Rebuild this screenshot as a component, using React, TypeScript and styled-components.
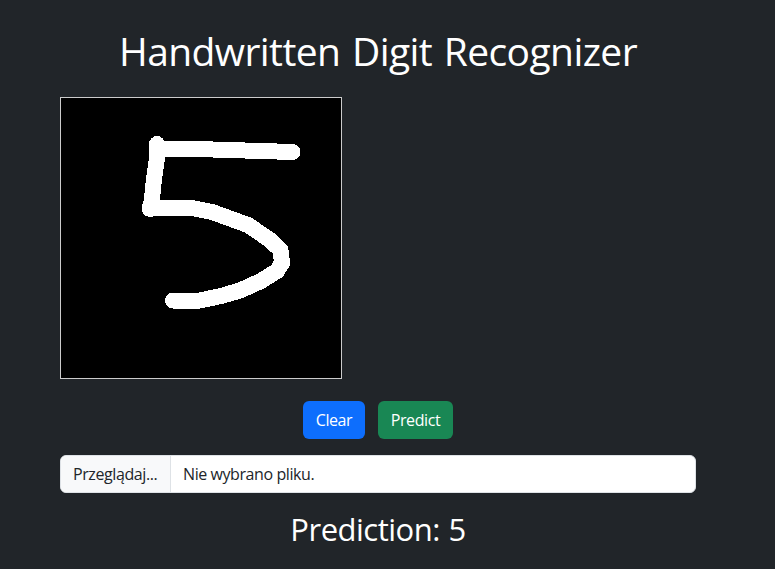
import React from "react";
import styled, { createGlobalStyle } from "styled-components";

const GlobalStyle = createGlobalStyle`
  *, *::before, *::after { box-sizing: border-box; }
  body {
    margin: 0;
    background: #212529;
    color: #fff;
    font-family: "Open Sans", "Noto Sans", sans-serif;
    font-size: 16px;
    line-height: 1.5;
    overflow: hidden;
  }
`;

const Page = styled.main`
  display: flex;
  flex-direction: column;
  width: 636px;
  height: 569px;
  margin-left: 60px;
  padding-top: 27px;
`;

const Title = styled.h1`
  margin: 0 0 22px;
  font-size: 39px;
  font-weight: 400;
  line-height: 48px;
  letter-spacing: -0.58px;
  word-spacing: 2px;
  text-align: center;
  white-space: nowrap;
`;

const Board = styled.div`
  width: 282px;
  height: 282px;
  border: 1px solid #ccc;
  background: #000;

  svg { display: block; }
`;

const Actions = styled.div`
  display: flex;
  justify-content: center;
  gap: 13px;
  margin: 22px 0 16px;
`;

const Button = styled.button<{ $color: string; $width: number }>`
  width: ${({ $width }) => $width}px;
  height: 38px;
  padding: 0;
  border: 0;
  border-radius: 6px;
  background: ${({ $color }) => $color};
  color: #fff;
  font: inherit;
  letter-spacing: -0.42px;
`;

const FileField = styled.label`
  display: flex;
  height: 38px;
  border: 1px solid #dee2e6;
  border-radius: 6px;
  background: #fff;
  color: #212529;
  line-height: 37px;
  overflow: hidden;
  white-space: nowrap;
`;

const Browse = styled.span`
  width: 110px;
  padding-left: 12px;
  border-right: 1px solid #dee2e6;
  background: #f8f9fa;
  letter-spacing: -0.4px;
`;

const FileName = styled.span`
  padding-left: 12px;
  letter-spacing: -0.42px;
`;

const Result = styled.h2`
  margin: 17px 0 0;
  font-size: 31px;
  font-weight: 400;
  line-height: 38px;
  letter-spacing: -0.5px;
  word-spacing: 1px;
  text-align: center;
`;

export default function App() {
  return (
    <>
      <GlobalStyle />
      <Page>
        <Title>Handwritten Digit Recognizer</Title>
        <Board>
          <svg width="280" height="280" viewBox="0 0 280 280" shapeRendering="crispEdges">
            <g fill="none" stroke="#fff" strokeWidth="16" strokeLinecap="round" strokeLinejoin="round">
              <path d="M96 46V60L94 74L92 90L91 101L89 111" />
              <path d="M96 51H136L231.5 54" />
              <path d="M88.5 110H131L151 114L187 127L209 142L219.5 152L221 165L216 173L200 183L179 192.5L160 198L139 202.5H112" />
            </g>
          </svg>
        </Board>
        <Actions>
          <Button type="button" $color="#0d6efd" $width={62}>Clear</Button>
          <Button type="button" $color="#198754" $width={75}>Predict</Button>
        </Actions>
        <FileField>
          <Browse>Przeglądaj...</Browse>
          <FileName>Nie wybrano pliku.</FileName>
        </FileField>
        <Result>Prediction: 5</Result>
      </Page>
    </>
  );
}
